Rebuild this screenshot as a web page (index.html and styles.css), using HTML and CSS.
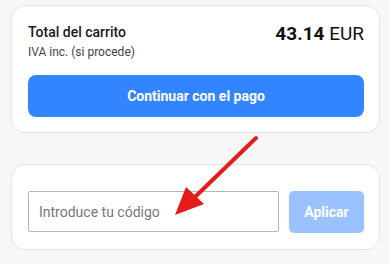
FILE: index.html
```html
<!DOCTYPE html>
<html lang="es">
  <head>
    <meta charset="UTF-8">
    <meta name="viewport" content="width=device-width, initial-scale=1.0">
    <title>Carrito</title>
    <link rel="stylesheet" href="styles.css">
  </head>
  <body>
    <div class="page">
      <section class="card summary">
        <div class="total-row">
          <div>
            <div class="total-label">Total del carrito</div>
            <div class="total-note">IVA inc. (si procede)</div>
          </div>
          <div class="total-price"><strong>43.14</strong> EUR</div>
        </div>
        <button class="btn-primary">Continuar con el pago</button>
      </section>

      <section class="card coupon">
        <input class="coupon-input" type="text" placeholder="Introduce tu código">
        <button class="btn-apply">Aplicar</button>
      </section>

      <svg class="arrow" width="100" height="90" viewBox="0 0 100 90">
        <line x1="86" y1="3" x2="26" y2="61" stroke="#e51c1c" stroke-width="4" stroke-linecap="round"/>
        <polygon points="5,80 16,52 34,69" fill="#e51c1c"/>
      </svg>
    </div>
  </body>
</html>
```

FILE: styles.css
```css
body, html {
  margin: 0;
  padding: 0;
  background-color: #f7f7f7;
  font-family: Roboto, 'Liberation Sans', sans-serif;
  color: #1a1a1a;
}

.page {
  position: relative;
  padding: 5px 10px 0 11px;
  display: flex;
  flex-direction: column;
  gap: 31px;
}

.card {
  background-color: #fff;
  border: 1px solid #e4e4e4;
  border-radius: 14px;
  padding: 0 15px 0 16px;
}

.summary {
  padding-top: 17px;
  padding-bottom: 15px;
}

.total-row {
  display: flex;
  justify-content: space-between;
  align-items: flex-start;
}

.total-label {
  font-size: 14px;
  font-weight: 500;
  line-height: 18px;
}

.total-note {
  font-size: 12px;
  color: #444;
  line-height: 16px;
  margin-top: 3px;
}

.total-price {
  font-size: 19px;
  line-height: 22px;
  color: #111;
}

.total-price strong {
  font-weight: 700;
}

.btn-primary {
  display: block;
  width: 100%;
  height: 42px;
  margin-top: 15px;
  border: none;
  border-radius: 8px;
  background-color: #3385ff;
  color: #fff;
  font-family: inherit;
  font-size: 14px;
  font-weight: 700;
}

.coupon {
  display: flex;
  gap: 10px;
  padding-top: 26px;
  padding-bottom: 16px;
}

.coupon-input {
  flex: 1;
  height: 41px;
  box-sizing: border-box;
  border: 1px solid #b5b5b5;
  border-radius: 2px;
  padding: 0 10px;
  font-family: inherit;
  font-size: 14px;
}

.coupon-input::placeholder {
  color: #777;
}

.btn-apply {
  width: 75px;
  height: 42px;
  border: none;
  border-radius: 5px;
  background-color: #99c2ff;
  color: #fff;
  font-family: inherit;
  font-size: 14px;
  font-weight: 700;
}

.arrow {
  position: absolute;
  left: 170px;
  top: 135px;
}
```
